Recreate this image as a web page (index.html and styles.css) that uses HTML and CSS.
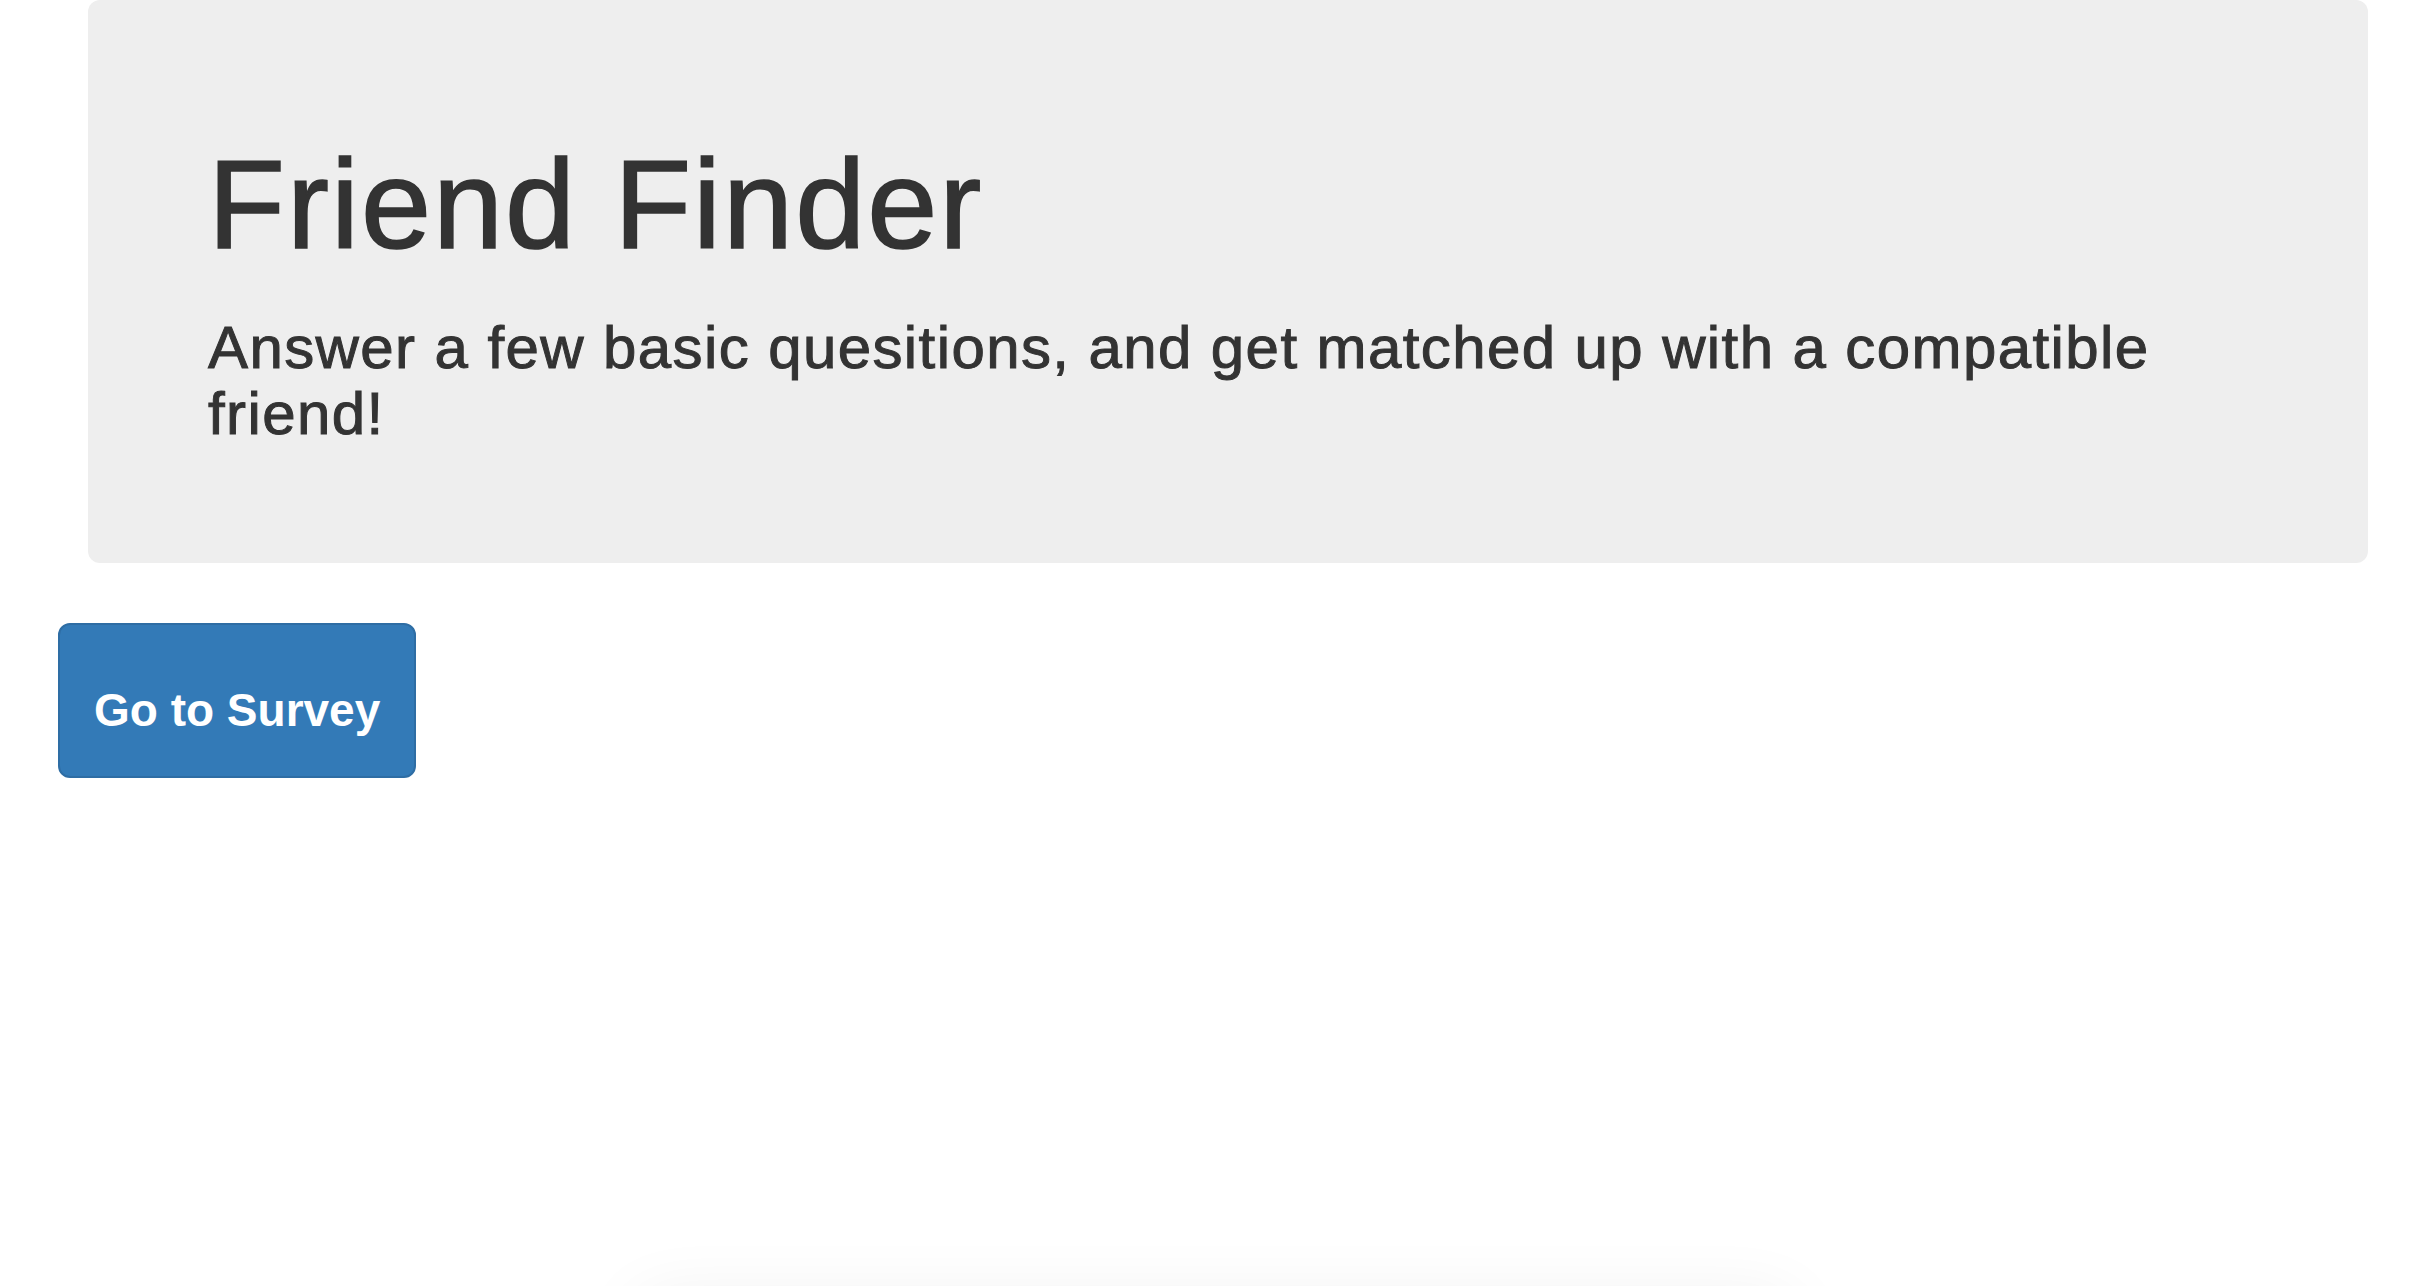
FILE: index.html
```html
<!DOCTYPE html>
<html lang="en">
<head>
<meta charset="utf-8">
<title>Friend Finder</title>
<link rel="stylesheet" href="styles.css">
</head>
<body>
<div class="page">
  <div class="jumbotron">
    <h1 class="title">Friend Finder</h1>
    <h2 class="subtitle">Answer a few basic quesitions, and get matched up with a compatible friend!</h2>
  </div>
  <a class="btn-survey" href="#">Go to Survey</a>
  <div class="below-fold"></div>
</div>
</body>
</html>
```
FILE: styles.css
```css
html, body {
  margin: 0;
  padding: 0;
  background: #fff;
}
body {
  font-family: "Liberation Sans", Arial, Helvetica, sans-serif;
  color: #333;
  overflow: hidden;
}
.page {
  position: relative;
  height: 1286px;
  display: flex;
  flex-direction: column;
  align-items: flex-start;
}
.jumbotron {
  align-self: stretch;
  margin: 0 64px 60px 88px;
  padding: 96px 120px;
  background: #eeeeee;
  border-radius: 12px;
}
.title {
  margin: 40px 0 20px;
  font-size: 126px;
  line-height: 1.1;
  font-weight: 400;
  letter-spacing: 2px;
  color: #333;
  -webkit-text-stroke: 1.6px #333;
}
.subtitle {
  margin: 40px 0 20px;
  font-size: 60px;
  line-height: 1.1;
  font-weight: 400;
  letter-spacing: 1.4px;
  color: #333;
  -webkit-text-stroke: 1px #333;
}
.btn-survey {
  display: flex;
  align-items: center;
  box-sizing: border-box;
  height: 155px;
  margin-left: 58px;
  padding: 20px 34px 0;
  font-size: 46px;
  font-weight: 700;
  color: #fff;
  text-decoration: none;
  background: #337ab7;
  border: 2px solid #2e6da4;
  border-radius: 12px;
}
.below-fold {
  position: absolute;
  left: 640px;
  top: 1300px;
  width: 1150px;
  height: 120px;
  background: #fff;
  box-shadow: 0 0 70px rgba(0, 0, 0, 0.07);
}
```
